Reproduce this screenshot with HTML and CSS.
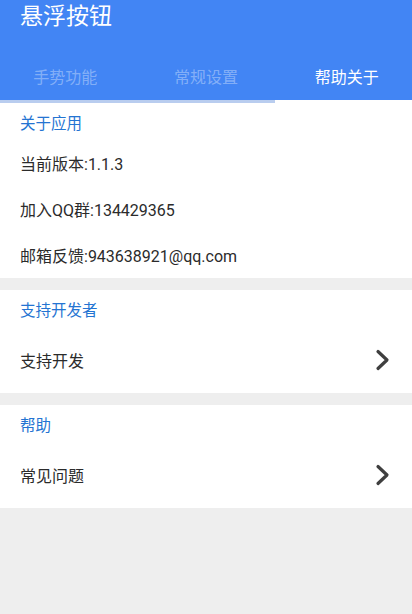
FILE: index.html
```html
<!DOCTYPE html>
<html lang="zh">
<head>
<meta charset="utf-8">
<link rel="stylesheet" href="styles.css">
</head>
<body>
<header class="appbar">
  <div class="title">悬浮按钮</div>
  <nav class="tabs">
    <div class="tab">手势功能</div>
    <div class="tab">常规设置</div>
    <div class="tab active">帮助关于</div>
  </nav>
  <div class="indicator">
    <div class="ind"></div>
    <div class="ind"></div>
    <div class="ind on"></div>
  </div>
</header>
<main class="content">
  <section class="group first">
    <div class="group-title">关于应用</div>
    <div class="row small">当前版本:1.1.3</div>
    <div class="row small">加入QQ群:134429365</div>
    <div class="row small">邮箱反馈:943638921@qq.com</div>
  </section>
  <section class="group">
    <div class="group-title">支持开发者</div>
    <div class="row big">
      <span>支持开发</span>
      <svg class="chev" width="16" height="22" viewBox="0 0 16 22"><path d="M3 2.5 L12 11 L3 19.5" fill="none" stroke="#3f3f3f" stroke-width="3.2" stroke-linecap="round" stroke-linejoin="round"/></svg>
    </div>
  </section>
  <section class="group">
    <div class="group-title">帮助</div>
    <div class="row big">
      <span>常见问题</span>
      <svg class="chev" width="16" height="22" viewBox="0 0 16 22"><path d="M3 2.5 L12 11 L3 19.5" fill="none" stroke="#3f3f3f" stroke-width="3.2" stroke-linecap="round" stroke-linejoin="round"/></svg>
    </div>
  </section>
</main>
</body>
</html>
```

FILE: styles.css
```css
* { box-sizing: border-box; }
html, body {
  margin: 0;
  padding: 0;
  width: 412px;
  height: 614px;
  overflow: hidden;
  background: #eeeeee;
  font-family: Roboto, "Noto Sans CJK SC", sans-serif;
}
.appbar {
  background: #4285f4;
  display: flex;
  flex-direction: column;
}
.title {
  height: 51px;
  line-height: 34px;
  padding-left: 20px;
  color: #ffffff;
  font-size: 23px;
}
.tabs {
  display: flex;
  height: 49px;
  margin: 0 -5px;
}
.tab {
  flex: 1;
  display: flex;
  align-items: center;
  justify-content: center;
  font-size: 16px;
  color: rgba(255, 255, 255, 0.36);
}
.tab.active {
  color: #ffffff;
}
.indicator {
  display: flex;
  height: 3px;
}
.ind {
  flex: 1;
  background: #b9cdef;
}
.ind.on {
  background: #ffffff;
}
.content {
  display: flex;
  flex-direction: column;
}
.group {
  background: #ffffff;
  margin-top: 12px;
  display: flex;
  flex-direction: column;
}
.group.first {
  margin-top: 0;
}
.group-title {
  height: 37px;
  display: flex;
  align-items: center;
  padding-left: 20px;
  color: #2474d2;
  font-size: 15.5px;
}
.row {
  display: flex;
  align-items: center;
  justify-content: space-between;
  padding: 0 21px 0 20px;
  color: #2b2b2b;
  font-size: 16px;
}
.row.small {
  height: 46px;
}
.row.big {
  height: 66px;
}
.chev {
  display: block;
}
```
